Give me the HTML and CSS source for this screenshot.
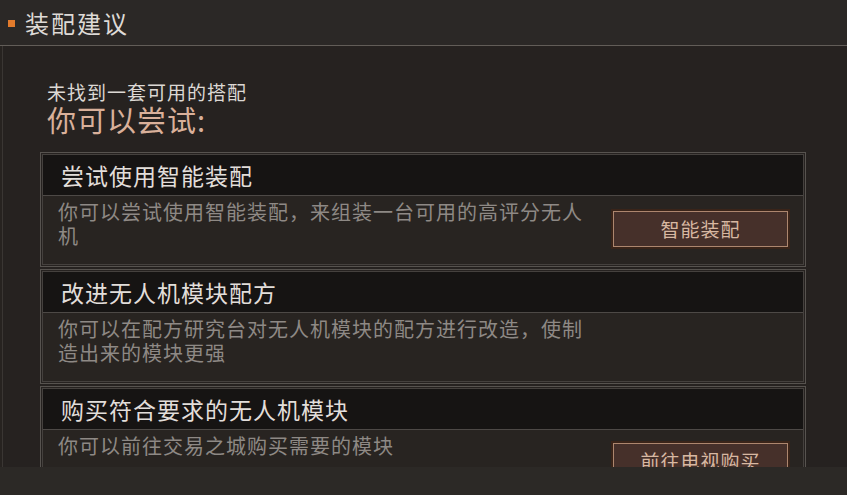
FILE: index.html
```html
<!DOCTYPE html>
<html lang="zh">
<head>
<meta charset="utf-8">
<link rel="stylesheet" href="styles.css">
</head>
<body>
<div class="topbar">
  <span class="mark"></span>
  <span class="page-title">装配建议</span>
</div>
<div class="panel">
  <div class="intro">
    <div class="intro-sub">未找到一套可用的搭配</div>
    <div class="intro-main">你可以尝试:</div>
  </div>
  <div class="card">
    <div class="card-inner">
      <div class="card-head">尝试使用智能装配</div>
      <div class="card-body">
        <div class="card-text">你可以尝试使用智能装配，来组装一台可用的高评分无人机</div>
        <div class="btn">智能装配</div>
      </div>
    </div>
  </div>
  <div class="card">
    <div class="card-inner">
      <div class="card-head">改进无人机模块配方</div>
      <div class="card-body">
        <div class="card-text">你可以在配方研究台对无人机模块的配方进行改造，使制造出来的模块更强</div>
      </div>
    </div>
  </div>
  <div class="card">
    <div class="card-inner">
      <div class="card-head">购买符合要求的无人机模块</div>
      <div class="card-body">
        <div class="card-text">你可以前往交易之城购买需要的模块</div>
        <div class="btn btn-high">前往电视购买</div>
      </div>
    </div>
  </div>
</div>
<div class="footer"></div>
</body>
</html>
```
FILE: styles.css
```css
html, body {
  margin: 0;
  padding: 0;
}
body {
  width: 847px;
  height: 495px;
  overflow: hidden;
  background: #272320;
  font-family: "Noto Sans CJK SC", "Noto Sans", sans-serif;
  color: #dcd8d4;
}
.topbar {
  height: 46px;
  border-bottom: 1px solid #625d58;
  background: #2b2826;
  display: flex;
  align-items: center;
  padding-left: 8px;
  box-sizing: border-box;
}
.mark {
  width: 7px;
  height: 7px;
  background: #e27b2c;
  margin-right: 10px;
  margin-top: 1px;
}
.page-title {
  font-size: 24px;
  letter-spacing: 2px;
  color: #dedad6;
  line-height: 30px;
}
.panel {
  height: 421px;
  overflow: hidden;
  margin-left: 2px;
  border-left: 1px solid #3a3633;
  padding-left: 37px;
  box-sizing: border-box;
  background: #262220;
}
.intro {
  padding-top: 34px;
  padding-left: 7px;
  margin-bottom: 18px;
}
.intro-sub {
  font-size: 19px;
  line-height: 24px;
  letter-spacing: 1px;
  color: #dcd8d4;
}
.intro-main {
  font-size: 29px;
  line-height: 30px;
  letter-spacing: 1px;
  color: #d9b09a;
}
.card {
  width: 766px;
  box-sizing: border-box;
  border: 1px solid #57534f;
  padding: 1px;
  margin-bottom: 2px;
}
.card-inner {
  border: 1px solid #45413e;
}
.card-head {
  height: 40px;
  border-bottom: 1px solid #4d4946;
  background: #161413;
  padding-left: 18px;
  font-size: 23px;
  letter-spacing: 1px;
  line-height: 40px;
  color: #e2deda;
}
.card-body {
  height: 68px;
  background: #282421;
  display: flex;
  justify-content: space-between;
  align-items: flex-start;
  padding: 0 15px 0 15px;
  box-sizing: border-box;
}
.card-text {
  width: 535px;
  padding-top: 4px;
  font-size: 20px;
  line-height: 24px;
  letter-spacing: 1px;
  color: #8e8985;
}
.btn {
  width: 175px;
  height: 36px;
  margin-top: 15px;
  box-sizing: border-box;
  border: 1px solid #ad866e;
  box-shadow: 0 0 0 2px #3a2419;
  background: #46302a;
  color: #d8b8a2;
  font-size: 19px;
  letter-spacing: 1px;
  text-align: center;
  line-height: 34px;
}
.btn-high {
  margin-top: 13px;
}
.footer {
  height: 28px;
  background: #2c2926;
}
```
